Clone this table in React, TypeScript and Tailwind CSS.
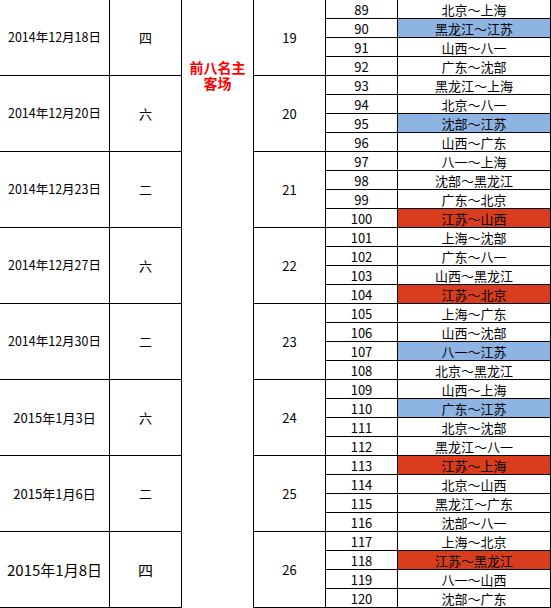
import type { ReactNode } from 'react';

type Match = { no: number; teams: string; mark?: 'blue' | 'red' };
type Round = { date: string; day: string; round: number; matches: Match[]; big?: boolean; small?: boolean };

const rounds: Round[] = [
  {
    date: '2014年12月18日',
    day: '四',
    round: 19,
    matches: [
      { no: 89, teams: '北京～上海' },
      { no: 90, teams: '黑龙江～江苏', mark: 'blue' },
      { no: 91, teams: '山西～八一' },
      { no: 92, teams: '广东～沈部' },
    ],
  },
  {
    date: '2014年12月20日',
    day: '六',
    round: 20,
    matches: [
      { no: 93, teams: '黑龙江～上海' },
      { no: 94, teams: '北京～八一' },
      { no: 95, teams: '沈部～江苏', mark: 'blue' },
      { no: 96, teams: '山西～广东' },
    ],
  },
  {
    date: '2014年12月23日',
    day: '二',
    round: 21,
    matches: [
      { no: 97, teams: '八一～上海' },
      { no: 98, teams: '沈部～黑龙江' },
      { no: 99, teams: '广东～北京' },
      { no: 100, teams: '江苏～山西', mark: 'red' },
    ],
  },
  {
    date: '2014年12月27日',
    day: '六',
    round: 22,
    matches: [
      { no: 101, teams: '上海～沈部' },
      { no: 102, teams: '广东～八一' },
      { no: 103, teams: '山西～黑龙江' },
      { no: 104, teams: '江苏～北京', mark: 'red' },
    ],
  },
  {
    date: '2014年12月30日',
    day: '二',
    round: 23,
    matches: [
      { no: 105, teams: '上海～广东' },
      { no: 106, teams: '山西～沈部' },
      { no: 107, teams: '八一～江苏', mark: 'blue' },
      { no: 108, teams: '北京～黑龙江' },
    ],
  },
  {
    date: '2015年1月3日',
    day: '六',
    round: 24,
    small: true,
    matches: [
      { no: 109, teams: '山西～上海' },
      { no: 110, teams: '广东～江苏', mark: 'blue' },
      { no: 111, teams: '北京～沈部' },
      { no: 112, teams: '黑龙江～八一' },
    ],
  },
  {
    date: '2015年1月6日',
    day: '二',
    round: 25,
    small: true,
    matches: [
      { no: 113, teams: '江苏～上海', mark: 'red' },
      { no: 114, teams: '北京～山西' },
      { no: 115, teams: '黑龙江～广东' },
      { no: 116, teams: '沈部～八一' },
    ],
  },
  {
    date: '2015年1月8日',
    day: '四',
    round: 26,
    big: true,
    matches: [
      { no: 117, teams: '上海～北京' },
      { no: 118, teams: '江苏～黑龙江', mark: 'red' },
      { no: 119, teams: '八一～山西' },
      { no: 120, teams: '沈部～广东' },
    ],
  },
];

const Cell = ({ className = '', children }: { className?: string; children?: ReactNode }) => (
  <div className={`flex items-center justify-center border-r border-b border-black ${className}`}>
    {children}
  </div>
);

export default function App() {
  return (
    <div
      className="w-[551px] h-[608px] overflow-hidden bg-white text-black text-[13px] leading-none"
      style={{ fontFamily: '"Noto Sans CJK SC", "Liberation Sans", sans-serif' }}
    >
      <div className="grid grid-cols-[110px_72px_72px_72px_72px_153px] auto-rows-[19px]">
        {rounds.map((r, i) => (
          <>
            <Cell
              key={`d${i}`}
              className={`row-span-4 whitespace-nowrap ${
                r.big ? 'text-[15px]' : r.small ? 'text-[13px]' : 'text-[12.5px]'
              }`}
            >
              {r.date}
            </Cell>
            <Cell key={`w${i}`} className={`row-span-4 ${r.big ? 'text-[15px]' : 'text-[13px]'}`}>
              {r.day}
            </Cell>
            {i === 0 && (
              <div className="row-span-32 border-r border-black flex flex-col items-center pt-[59px] text-[14px] leading-[16px] font-bold text-[#ff0000]">
                <span>前八名主</span>
                <span>客场</span>
              </div>
            )}
            <Cell key={`r${i}`} className="row-span-4">
              {r.round}
            </Cell>
            {r.matches.map((m) => (
              <>
                <Cell key={`n${m.no}`}>{m.no}</Cell>
                <Cell
                  key={`t${m.no}`}
                  className={
                    m.mark === 'blue' ? 'bg-[#8db4e2]' : m.mark === 'red' ? 'bg-[#da3c1e]' : ''
                  }
                >
                  {m.teams}
                </Cell>
              </>
            ))}
          </>
        ))}
      </div>
    </div>
  );
}
